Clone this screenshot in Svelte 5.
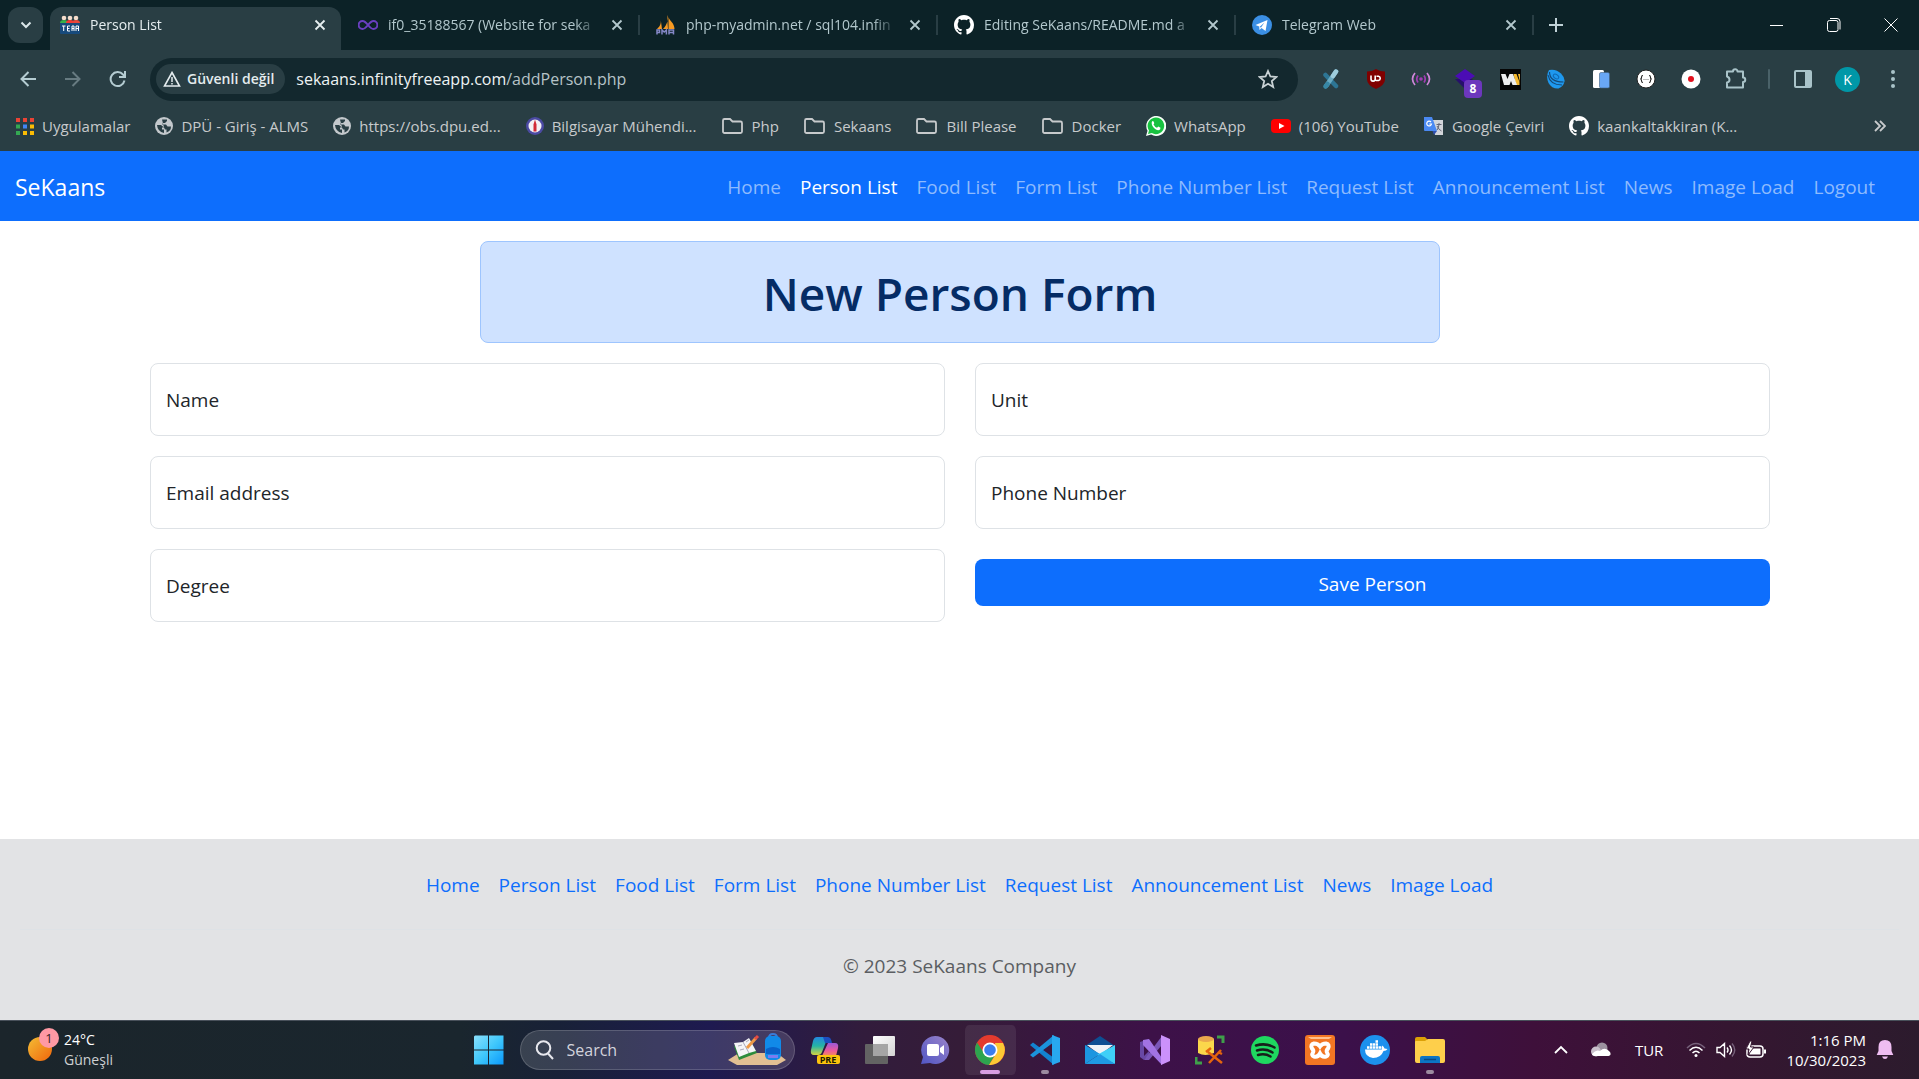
<script>
  const tabs = [
    { icon: 'team', title: 'Person List', active: true },
    { icon: 'infinity', title: 'if0_35188567 (Website for seka' },
    { icon: 'pma', title: 'php-myadmin.net / sql104.infin' },
    { icon: 'github', title: 'Editing SeKaans/README.md a' },
    { icon: 'telegram', title: 'Telegram Web' }
  ];
  const bookmarks = [
    ['apps', 'Uygulamalar'],
    ['globe', 'DPÜ - Giriş - ALMS'],
    ['globe', 'https://obs.dpu.ed...'],
    ['seal', 'Bilgisayar Mühendi...'],
    ['folder', 'Php'],
    ['folder', 'Sekaans'],
    ['folder', 'Bill Please'],
    ['folder', 'Docker'],
    ['whatsapp', 'WhatsApp'],
    ['youtube', '(106) YouTube'],
    ['translate', 'Google Çeviri'],
    ['github', 'kaankaltakkiran (K...']
  ];
  const extensions = ['xtool', 'ublock', 'signal', 'stack', 'wappa', 'shell', 'device', 'json', 'record', 'puzzle'];
  const pages = ['Home', 'Person List', 'Food List', 'Form List', 'Phone Number List', 'Request List', 'Announcement List', 'News', 'Image Load'];
  const apps = ['copilot', 'taskview', 'chat', 'chrome', 'vscode', 'mail', 'vs', 'sqltools', 'spotify', 'xampp', 'docker', 'explorer'];
  const fields = [
    ['name', 'Name', 'text'],
    ['unit', 'Unit', 'text'],
    ['email', 'Email address', 'email'],
    ['phone', 'Phone Number', 'tel'],
    ['degree', 'Degree', 'text']
  ];
</script>

{#snippet icon(name)}
  {#if name === 'team'}
    <svg width="20" height="20" viewBox="0 0 20 20"><circle cx="4" cy="3" r="2.3" fill="#f4dccb"/><circle cx="10" cy="3" r="2.3" fill="#f4dccb"/><circle cx="16" cy="3" r="2.3" fill="#f4dccb"/><path d="M0 8q0-3 4-3t4 3z" fill="#36b04a"/><path d="M12 8q0-3 4-3t4 3z" fill="#e8483a"/><path d="M6 8q0-3 4-3t4 3z" fill="#f03c35"/><rect y="8" width="20" height="11" rx="1" fill="#174a7c"/><path d="M2 11h3.500M3.700 11v5M10 11H7.500v5H10M7.500 13.500H9.500M12 16v-5h2v5M12 13.500h2M16 16v-5h2.500v5M16 13.500h2.500" stroke="#fff" stroke-width="1" fill="none"/></svg>
  {:else if name === 'infinity'}
    <svg width="20" height="20" viewBox="0 0 20 20"><path d="M10 10C8 7.500 6.500 6 4.600 6a4 4 0 0 0 0 8C6.500 14 8 12.500 10 10s3.500-4 5.400-4a4 4 0 0 1 0 8c-1.900 0-3.400-1.500-5.400-4z" fill="none" stroke="#6a3fc0" stroke-width="2"/></svg>
  {:else if name === 'pma'}
    <svg width="20" height="20" viewBox="0 0 20 20"><path d="M4.500 3C5.500 8 4.500 11 1 14h5zM11 0c2 4 0 10-4 14h5zM12.500 2c1 4 6 6 6 12h-6z" fill="#f79a22"/><path d="M1 19.500v-4.500h2.500v2.500H1M6 19.500v-4.500l2.200 2 2.200-2v4.500M13 19.500v-4.500h4.500v4.500M13 17.500h4" stroke="#8588c7" stroke-width="1.500" fill="none"/></svg>
  {:else if name === 'github'}
    <svg width="20" height="20" viewBox="0 0 16 16"><path fill="#fff" d="M8 0C3.580 0 0 3.580 0 8c0 3.540 2.290 6.530 5.470 7.590.4.070.55-.17.55-.38 0-.19-.01-.82-.01-1.490-2.010.37-2.530-.49-2.690-.94-.09-.23-.48-.94-.82-1.130-.28-.15-.68-.52-.01-.53.63-.01 1.080.58 1.230.82.72 1.210 1.870.87 2.330.66.07-.52.28-.87.51-1.070-1.780-.2-3.640-.89-3.640-3.950 0-.87.31-1.590.82-2.150-.08-.2-.36-1.020.08-2.120 0 0 .67-.21 2.200.82.64-.18 1.320-.27 2-.27s1.360.09 2 .27c1.530-1.040 2.200-.82 2.200-.82.44 1.100.16 1.920.08 2.120.51.56.82 1.270.82 2.150 0 3.070-1.870 3.750-3.650 3.950.29.25.54.73.54 1.480 0 1.070-.01 1.930-.01 2.200 0 .21.15.46.55.38A8.010 8.010 0 0 0 16 8c0-4.420-3.580-8-8-8z"/></svg>
  {:else if name === 'telegram'}
    <svg width="20" height="20" viewBox="0 0 20 20"><circle cx="10" cy="10" r="10" fill="#3b8fe4"/><path d="M3.500 10l12-5-2 11-4-3-2 2-.3-3.500z" fill="#fff"/><path d="M7.500 12l5-4.500-3.500 5z" fill="#3b8fe4"/></svg>
  {:else if name === 'apps'}
    <svg width="18" height="20" viewBox="0 0 18 20"><path d="M0 2h4v4H0zM7 2h4v4H7zM14 2h4v4h-4z" fill="#ea4335"/><path d="M0 8.500h4v4H0z" fill="#34a853"/><path d="M7 8.500h4v4H7z" fill="#4285f4"/><path d="M14 8.500h4v4h-4zM7 15h4v4H7zM14 15h4v4h-4z" fill="#fbbc04"/><path d="M0 15h4v4H0z" fill="#34a853"/></svg>
  {:else if name === 'globe'}
    <svg width="18" height="18" viewBox="0 0 18 18"><circle cx="9" cy="9" r="9" fill="#c3c8cc"/><path d="M2 8l4 0 3 2.500H7v2h2V16Q2.500 14.500 2 8M7 2.500h5v1.500L10 6H8L7 7.500h4l1.500 2H16Q16 14 11.500 15.500l0-3h-1.500l-1-2" fill="#293e44"/></svg>
  {:else if name === 'seal'}
    <svg width="18" height="20" viewBox="0 0 18 20"><circle cx="9" cy="10" r="9" fill="#4b4aa3"/><circle cx="9" cy="10" r="6.500" fill="#f3f0f5"/><path d="M9 3.500l1.500 5v7h-3v-7z" fill="#d22a39"/></svg>
  {:else if name === 'folder'}
    <svg width="22" height="18" viewBox="0 0 22 18"><path d="M1 3.500A1.500 1.500 0 0 1 2.500 2H8l2.500 2.500h8A1.500 1.500 0 0 1 20 6v8.500a1.500 1.500 0 0 1-1.500 1.500h-16A1.500 1.500 0 0 1 1 14.500z" fill="none" stroke="#c7cacc" stroke-width="1.800"/></svg>
  {:else if name === 'whatsapp'}
    <svg width="20" height="20" viewBox="0 0 20 20"><path d="M0 20l1.500-5.200A10 10 0 1 1 5.200 18.600z" fill="#f6fff8"/><path d="M2 18l1-3.500a8.300 8.300 0 1 1 2.800 2.600z" fill="#17c240"/><path d="M6 5.500q1-1 1.700.2l.6 1.600-.8 1.200q1.300 2.500 3.500 3.300l1.300-1.300 2.200 1.200q.2 2-2 2.600C8.500 14 4.500 9 6 5.500z" fill="#fff"/></svg>
  {:else if name === 'youtube'}
    <svg width="20" height="14" viewBox="0 0 20 14"><rect width="20" height="14" rx="4" fill="#f00"/><path d="M8 4l5.500 3L8 10z" fill="#fff"/></svg>
  {:else if name === 'translate'}
    <svg width="20" height="20" viewBox="0 0 20 20"><path d="M8 4h11v15H11z" fill="#d2d5da"/><path d="M0 1h8l5 14H1q-1 0-1-1z" fill="#4a89f3"/><path d="M8.500 15h4.500l-3 4z" fill="#2f50ae"/><path d="M7 6a2.400 2.400 0 1 0 .5 2H5.300" fill="none" stroke="#fff" stroke-width="1.200"/><path d="M12.500 8.500h5M15 7v1.500q-.5 4-2 5.500M13 10q2 4 4.500 5" stroke="#667" fill="none"/></svg>
  {:else if name === 'xtool'}
    <svg width="18" height="20" viewBox="0 0 18 20" stroke-width="4.500" stroke-linecap="round"><path d="M3.500 6L14 17" stroke="#2d7594"/><path d="M14 2.500L4.500 16.500" stroke="#6aaac2"/><path d="M14 2.500L11 7" stroke="#9fcddc"/><path d="M5.500 15l-2 2.500" stroke="#3787a5"/></svg>
  {:else if name === 'ublock'}
    <svg width="20" height="20" viewBox="0 0 20 20"><path d="M10 0q4 2.500 9 2.500v8Q19 16 10 20 1 16 1 10.500v-8Q6 2.500 10 0z" fill="#800000"/><path d="M5 6.500v3.500a2 2 0 0 0 4.200 0V6.500M9.200 12V6.500M10.500 7.200h2a2.200 2.200 0 0 1 0 4.300h-2.500" fill="none" stroke="#fff" stroke-width="1.600"/></svg>
  {:else if name === 'signal'}
    <svg width="20" height="20" viewBox="0 0 20 20" fill="none" stroke-width="1.700"><circle cx="10" cy="10" r="1.800" fill="#a23cb4"/><path d="M7 6.500q-2.500 3.500 0 7M13 6.500q2.500 3.500 0 7" stroke="#a23cb4"/><path d="M4 4q-5 6 0 12M16 4q5 6 0 12" stroke="#cf87da"/></svg>
  {:else if name === 'stack'}
    <svg width="24" height="20" viewBox="0 0 24 20"><path d="M1 10l9 9 9-9z" fill="#27106b"/><path d="M11 0l10 7-10 7L1 7z" fill="#4b0cb5"/></svg>
    <span class="badge">8</span>
  {:else if name === 'wappa'}
    <svg width="21" height="21" viewBox="0 0 21 21"><rect width="21" height="21" fill="#050505"/><path d="M13.500 5h3l3 8v3h-3.500zM18 5h2v8z" fill="#f5b92e"/><path d="M1 5h4.500l2 5 2-5H13l4 11h-4.500l-1.500-4-1.500 4H4z" fill="#eee"/></svg>
  {:else if name === 'shell'}
    <svg width="20" height="20" viewBox="0 0 20 20"><path d="M3 1q7-1.500 12 3.500 4 4 3.500 8-1 5-6 7Q6 20 2.500 14-.5 7 3 1z" fill="#1e98ee"/><path d="M3.500 3q0 10 14 10M2 6q2 10 14 10" stroke="#154a78" stroke-width="1.200" fill="none"/><ellipse cx="10" cy="7.500" rx="3" ry="2" fill="none" stroke="#0d68b5" transform="rotate(35 10 7.500)"/></svg>
  {:else if name === 'device'}
    <svg width="18" height="20" viewBox="0 0 18 20"><rect x="1" y="1" width="11" height="18" rx="1.500" fill="#fff"/><rect x="7.500" y="3.500" width="10" height="15.500" rx="1.500" fill="#69a7f5" stroke="#3f5f80" stroke-width=".6"/></svg>
  {:else if name === 'json'}
    <svg width="20" height="20" viewBox="0 0 20 20"><circle cx="10" cy="10" r="9" fill="#fff" stroke="#222"/><path d="M7 6.500q-1.500 0-1.500 1.800t-1.200 1.700q1.200 0 1.200 1.700t1.500 1.800M13 6.500q1.500 0 1.500 1.800t1.200 1.700q-1.200 0-1.200 1.700t-1.500 1.800" fill="none" stroke="#222" stroke-width="1.100"/><path d="M7.500 10.500h5" stroke="#777" stroke-dasharray="1 1"/></svg>
  {:else if name === 'record'}
    <svg width="20" height="20" viewBox="0 0 20 20"><circle cx="10" cy="10" r="9.500" fill="#fff"/><circle cx="10" cy="10" r="3" fill="#e3101d"/></svg>
  {:else if name === 'puzzle'}
    <svg width="22" height="22" viewBox="0 0 22 22"><path d="M2 3.500h6a2 2 0 0 1 4.500 0H18v6a2 2 0 0 1 0 4.500v5.500H2v-5q2.500-.5 2.500-2.800T2 8.500z" fill="none" stroke="#a9c3c9" stroke-width="2" stroke-linejoin="round"/></svg>
  {:else if name === 'close'}
    <svg width="12" height="12" viewBox="0 0 12 12"><path d="M1.500 1.500l9 9M10.500 1.500l-9 9" stroke="currentColor" stroke-width="1.800"/></svg>
  {:else if name === 'copilot'}
    <svg width="30" height="32" viewBox="0 0 30 32">
      <defs><linearGradient id="cpa" x1="0" y1="0" x2="0" y2="1"><stop stop-color="#2388df"/><stop offset=".5" stop-color="#25b3a5"/><stop offset="1" stop-color="#d6d641"/></linearGradient><linearGradient id="cpb" x1="0" y1="0" x2="0" y2="1"><stop stop-color="#9a58d8"/><stop offset=".6" stop-color="#ee5a99"/><stop offset="1" stop-color="#f18c58"/></linearGradient></defs>
      <path d="M7 3h11l-6 15q-1 3-4 3H4q-4 0-3-5l2-9q1-4 4-4z" fill="url(#cpa)"/><path d="M13 3h5q3 0 4 6h-7z" fill="#1c4fc0"/><path d="M18 9h7q4 0 3 5l-2 8H12z" fill="url(#cpb)"/><rect x="7" y="21" width="23" height="9" rx="2" fill="#fdc40c"/><text x="18" y="29" class="pre">PRE</text></svg>
  {:else if name === 'taskview'}
    <svg width="30" height="30" viewBox="0 0 30 30"><defs><linearGradient id="tv" x1="0" y1="0" x2="1" y2="1"><stop stop-color="#fff"/><stop offset="1" stop-color="#d3d3d3"/></linearGradient></defs><rect y="9" width="23" height="20" rx="1" fill="#636363"/><rect x="8" y="1" width="22" height="20" rx="1" fill="url(#tv)"/><path d="M8 9h15v12H8z" fill="#a5a5a5"/></svg>
  {:else if name === 'chat'}
    <svg width="30" height="30" viewBox="0 0 30 30"><defs><linearGradient id="ch" x1="1" y1="0" x2="0" y2="1"><stop stop-color="#9a83c9"/><stop offset="1" stop-color="#5156c5"/></linearGradient></defs><path d="M15 1a14 14 0 1 1-5 27l-9 1 2-7A14 14 0 0 1 15 1z" fill="url(#ch)"/><rect x="7" y="9" width="12" height="12" rx="2" fill="#fff"/><path d="M20 13l4-3v10l-4-3z" fill="#fff"/></svg>
  {:else if name === 'chrome'}
    <svg width="30" height="30" viewBox="0 0 30 30"><circle cx="15" cy="15" r="15" fill="#e33b2e"/><path d="M2 7.500A15 15 0 0 0 14 30l7-12-6 4-6-4z" fill="#2da44f"/><path d="M28 8a15 15 0 0 1-14 22l7.500-12L20 8z" fill="#fcc934"/><path d="M3 6.500l6 11L15 8h13A15 15 0 0 0 3 6.500z" fill="#e33b2e"/><circle cx="15" cy="15" r="7.500" fill="#fff"/><circle cx="15" cy="15" r="5.800" fill="#3b7ded"/></svg>
  {:else if name === 'vscode'}
    <svg width="30" height="30" viewBox="0 0 30 30"><path d="M0 10l3-2.500L24 23v7z" fill="#1383cf"/><path d="M0 20l3 2.500L24 7V0z" fill="#1b93dc"/><path d="M22 0l8 3v24l-8 3z" fill="#28a8ef"/></svg>
  {:else if name === 'mail'}
    <svg width="30" height="30" viewBox="0 0 30 30"><path d="M0 11L15 1l15 10z" fill="#0d4f93"/><path d="M2 10h26L15 20z" fill="#eef3f7"/><path d="M0 10l15 9-15 10z" fill="#1c96e0"/><path d="M30 10L12 20l18 9z" fill="#3fd0f7"/><path d="M0 29l15-10 15 10z" fill="#1f9ae3"/></svg>
  {:else if name === 'vs'}
    <svg width="30" height="30" viewBox="0 0 30 30"><path d="M0 7l3-1 6 5v9l-5 5-4-3z" fill="#6848a5"/><path d="M4 10l6 5-6 6z" fill="#3b1148"/><path d="M4 25L22 1v9L9 25z" fill="#7a56b8"/><path d="M3 5l6-1 13 19v7L3 10z" fill="#a273e4"/><path d="M21 0l9 4v22l-9 4z" fill="#cb91fb"/></svg>
  {:else if name === 'sqltools'}
    <svg width="30" height="30" viewBox="0 0 30 30"><path d="M3 4v14q7 4 16 0V4z" fill="#fbd74b"/><ellipse cx="11" cy="4" rx="8" ry="3" fill="#eaa84d"/><path d="M22 2h6v6M1 22v6h6" fill="none" stroke="#3f9f4a" stroke-width="3"/><path d="M13 17l14 11M26 15l-12 13M11 17l5-4M23 17l4 2" stroke="#e4650d" stroke-width="2.500"/></svg>
  {:else if name === 'spotify'}
    <svg width="28" height="28" viewBox="0 0 28 28"><circle cx="14" cy="14" r="14" fill="#1fd760"/><path d="M5 9.500q10-3 18.500 2M6 14.500q8.500-2.500 15.500 2M7 19q7-2 12.500 1.500" fill="none" stroke="#171f1a" stroke-width="2.500" stroke-linecap="round"/></svg>
  {:else if name === 'xampp'}
    <svg width="30" height="30" viewBox="0 0 30 30"><rect width="30" height="30" rx="3" fill="#f27623"/><path d="M3 2h24l-3 2H6z" fill="#ffc18e"/><path d="M9 8.500q4 0 6 3 2-3 6-3 4 1 2 5-2 2-1 4 2 3-1 4-4 1-6-3-2 4-6 3-3-1-1-4 1-2-1-4-2-4 2-5z" fill="none" stroke="#fff" stroke-width="4"/></svg>
  {:else if name === 'docker'}
    <svg width="30" height="30" viewBox="0 0 30 30"><circle cx="15" cy="15" r="15" fill="#1c90ed"/><path d="M5 14.500h17q-1-2 0-4 2 1 2.500 3l3 .5q-1 2-4 2Q21 23 13 23 5 22 5 14.500z" fill="#fff"/><path d="M7 12.500h14M10 9.500h8M15.500 6.500h2.500" stroke="#fff" stroke-width="2.500" stroke-dasharray="2.500 .5"/></svg>
  {:else if name === 'explorer'}
    <svg width="30" height="30" viewBox="0 0 30 30"><path d="M0 4q0-2 2-2h8l3 3v5H0z" fill="#dca006"/><path d="M0 7q0-1 1-1h9l3-2h15q2 0 2 2v20q0 2-2 2H2q-2 0-2-2z" fill="#fecf4b"/><path d="M5 28v-5q0-2 2-2h16q2 0 2 2v5z" fill="#0c75c4"/><path d="M9 24.500h12" stroke="#064a86" stroke-width="1.500"/></svg>
  {/if}
{/snippet}

<div class="screen">
  <header class="browser">
    <div class="tabstrip">
      <button class="tabsearch" aria-label="Search tabs"><svg width="12" height="8" viewBox="0 0 12 8"><path d="M1.500 1.500L6 6l4.500-4.500" fill="none" stroke="#dbe7ea" stroke-width="2"/></svg></button>
      {#each tabs as tab}
        <div class="tab" class:active={tab.active}>
          <button class="tabname">{@render icon(tab.icon)}<span>{tab.title}</span></button>
          <button class="x" aria-label="Close tab">{@render icon('close')}</button>
        </div>
      {/each}
      <button class="newtab" aria-label="New tab"><svg width="14" height="14" viewBox="0 0 14 14"><path d="M7 0v14M0 7h14" stroke="#c0d2d7" stroke-width="2"/></svg></button>
      <div class="window">
        <button aria-label="Minimize"><svg width="14" height="14" viewBox="0 0 14 14"><path d="M0 7.500h13" stroke="#fff"/></svg></button>
        <button aria-label="Restore"><svg width="14" height="14" viewBox="0 0 14 14" fill="none" stroke="#fff"><rect x="0.500" y="2.500" width="10.500" height="11" rx="2"/><path d="M3 .5h7q3 0 3 3v8"/></svg></button>
        <button aria-label="Close"><svg width="14" height="14" viewBox="0 0 14 14"><path d="M.5.500l13 13M13.500.500l-13 13" stroke="#fff"/></svg></button>
      </div>
    </div>

    <div class="toolbar">
      <button class="tool" aria-label="Back"><svg width="16" height="16" viewBox="0 0 16 16" fill="none" stroke="#b4ccd2" stroke-width="2"><path d="M16 8H2M8.500 1L1.500 8l7 7"/></svg></button>
      <button class="tool" aria-label="Forward"><svg width="16" height="16" viewBox="0 0 16 16" fill="none" stroke="#677b81" stroke-width="2"><path d="M0 8h14M7.500 1l7 7-7 7"/></svg></button>
      <button class="tool" aria-label="Reload"><svg width="18" height="18" viewBox="0 0 18 18" fill="none" stroke="#b4ccd2" stroke-width="2"><path d="M15.500 10.500A7 7 0 1 1 14 4.500l2 2M16 1v6h-6"/></svg></button>
      <div class="omnibox">
        <button class="secure"><svg width="18" height="16" viewBox="0 0 18 16"><path d="M9 1.500L16.500 15h-15z" fill="none" stroke="#e4ecee" stroke-width="1.600"/><path d="M9 6v5M9 12v1.500" stroke="#e4ecee" stroke-width="1.500"/></svg>Güvenli değil</button>
        <div class="url">sekaans.infinityfreeapp.com<span>/addPerson.php</span></div>
        <button class="star" aria-label="Bookmark"><svg width="20" height="20" viewBox="0 0 20 20"><path d="M10 2l2.400 5.500 6 .5-4.600 4 1.400 6-5.200-3.200L4.800 18l1.400-6L1.600 8l6-.5z" fill="none" stroke="#c9d2d5" stroke-width="1.800"/></svg></button>
      </div>
      {#each extensions as name}
        <button class="tool" aria-label={name}>{@render icon(name)}</button>
      {/each}
      <span class="divider"></span>
      <button class="tool" aria-label="Side panel"><svg width="18" height="18" viewBox="0 0 18 18"><rect x="1" y="1" width="16" height="16" rx="1" fill="none" stroke="#a9c3c9" stroke-width="2"/><path d="M11 1h6v16h-6z" fill="#a9c3c9"/></svg></button>
      <button class="tool" aria-label="Profile"><span class="avatar">K</span></button>
      <button class="tool" aria-label="Menu"><svg width="4" height="18" viewBox="0 0 4 18" fill="#a9c3c9"><circle cx="2" cy="2" r="2"/><circle cx="2" cy="9" r="2"/><circle cx="2" cy="16" r="2"/></svg></button>
    </div>

    <nav class="bookmarks">
      {#each bookmarks as [name, label]}
        <a href="#{label}">{@render icon(name)}{label}</a>
      {/each}
      <button aria-label="More bookmarks"><svg width="12" height="12" viewBox="0 0 12 12" fill="none" stroke="#c7cacc" stroke-width="1.800"><path d="M1 1l5 5-5 5M6 1l5 5-5 5"/></svg></button>
    </nav>
  </header>

  <nav class="navbar">
    <a class="brand" href="#home">SeKaans</a>
    <div class="links">
      {#each [...pages, 'Logout'] as page}
        <a href="#{page}" class:current={page === 'Person List'}>{page}</a>
      {/each}
    </div>
  </nav>

  <main>
    <div class="alert"><h1>New Person Form</h1></div>
    <form>
      {#each fields as [id, label, type]}
        <div class="field">
          <input {id} {type} />
          <label for={id}>{label}</label>
        </div>
      {/each}
      <button type="button" class="save">Save Person</button>
    </form>
  </main>

  <footer>
    <div class="footlinks">
      {#each pages as page}
        <a href="#{page}">{page}</a>
      {/each}
    </div>
    <p>© 2023 SeKaans Company</p>
  </footer>

  <div class="taskbar">
    <button class="weather">
      <svg width="34" height="44" viewBox="0 0 34 44"><defs><linearGradient id="sun" x1="0" y1="0" x2="1" y2="1"><stop stop-color="#f3bd35"/><stop offset="1" stop-color="#f0650c"/></linearGradient></defs><circle cx="13" cy="21" r="12" fill="url(#sun)"/><circle cx="22" cy="10" r="10" fill="#ff99a4"/><text x="22" y="15" class="count">1</text></svg>
      <span class="temp">24°C<small>Güneşli</small></span>
    </button>
    <div class="center">
      <button class="app" aria-label="Start"><svg width="30" height="30" viewBox="0 0 30 30"><defs><linearGradient id="win" x1="0" y1="0" x2="1" y2="1"><stop stop-color="#8be0fc"/><stop offset=".5" stop-color="#40c8fb"/><stop offset="1" stop-color="#0a98fb"/></linearGradient></defs><path d="M1 .5h13v14H0V1.500zM15 .5h14.500v14H15zM0 15.500h14v14H0zM15 15.500h14.500v14H15z" fill="url(#win)"/></svg></button>
      <label class="search">
        <svg width="20" height="20" viewBox="0 0 20 20" fill="none" stroke="#e8e8ee" stroke-width="2"><circle cx="8.500" cy="8" r="6.800"/><path d="M13 13.500l5 5.500"/></svg>
        <input type="text" placeholder="Search" aria-label="Search" />
        <svg width="58" height="34" viewBox="0 0 58 34"><path d="M0 27l11-7h38l9 7-9 5H9z" fill="#e2bf93"/><path d="M6 13l16-6 7 13-18 7z" fill="#2c8c3c"/><path d="M6 10l9-1 6-4 7 13-7 2-10 4z" fill="#f5f5f7"/><path d="M15 9l6 11M10 13l4-1M12 17l4-1M18 9l3-2" stroke="#a9a9ba"/><path d="M19 15l9-10" stroke="#ee9a46" stroke-width="3"/><path d="M27 6l3-3" stroke="#e54c43" stroke-width="3"/><path d="M41 5q0-4 4-4t4 4" fill="none" stroke="#3a7bd8" stroke-width="2"/><rect x="37" y="3" width="16" height="24" rx="5" fill="#118ae8"/><path d="M38 16q7-4 14 0v5H38z" fill="#0861c9"/><path d="M40 22h10v3H40z" fill="#7a7cf0"/></svg>
      </label>
      {#each apps as name}
        <button class="app" class:focused={name === 'chrome'} class:running={name === 'vscode' || name === 'explorer'} aria-label={name}>{@render icon(name)}</button>
      {/each}
    </div>
    <div class="tray">
      <svg width="14" height="10" viewBox="0 0 14 10"><path d="M1 8l6-6 6 6" fill="none" stroke="#fff" stroke-width="1.800"/></svg>
      <svg class="cloud" width="20" height="16" viewBox="0 0 20 16"><circle cx="11" cy="6" r="5.500" fill="#9c929f"/><circle cx="5" cy="9.500" r="5" fill="#c9c0cb"/><path d="M1 12q4-5 8-3 5-5 10 1 2 4-3 4H5q-4 0-4-2z" fill="#fff"/></svg>
      <span class="lang">TUR</span>
      <div class="status">
        <svg width="20" height="16" viewBox="0 0 20 16" fill="none" stroke="#fff" stroke-width="1.500"><path d="M1 6q9-9 18 0" stroke="#76617a"/><path d="M3.500 8.500q6.500-6.500 13 0M6.500 11q3.500-3.500 7 0"/><circle cx="10" cy="13.500" r="1.500" fill="#fff" stroke="none"/></svg>
        <svg width="20" height="16" viewBox="0 0 20 16" fill="none" stroke="#fff" stroke-width="1.400"><path d="M1 5.500h3L8.500 1.500v13L4 10.500H1zM11 5.500q2 2.500 0 5M13.500 3.500q4 4.500 0 9"/><path d="M16 1.500q5.500 6.500 0 13" stroke="#76617a"/></svg>
        <svg width="20" height="18" viewBox="0 0 20 18"><rect x="1" y="5" width="16" height="11" rx="3" fill="none" stroke="#fff" stroke-width="1.500"/><rect x="3.500" y="7.500" width="11" height="6" fill="#fff"/><path d="M18 8.500h2v4h-2z" fill="#fff"/><path d="M4 0L0 8h3l-1 6 6-8H4.500L6 0z" fill="#fff" stroke="#35162f"/></svg>
      </div>
      <time>1:16 PM<br />10/30/2023</time>
      <svg width="18" height="20" viewBox="0 0 18 20" fill="#efbdf2"><path d="M9 0q6.500 0 6.500 7v4l1.800 4H.7l1.800-4V7Q2.500 0 9 0zM6 16.500h6q-1 2.500-3 2.500t-3-2.500z"/></svg>
    </div>
  </div>
</div>

<style>
  :global(body) { margin: 0; }
  .screen { min-height: 100vh; display: flex; flex-direction: column; font-family: "Open Sans", "Noto Sans", sans-serif; background: #fff; color: #212529; overflow-x: hidden; }
  .screen * { box-sizing: border-box; }
  button { font: inherit; color: inherit; background: none; border: 0; padding: 0; display: flex; align-items: center; justify-content: center; flex: none; }
  a { text-decoration: none; color: inherit; white-space: nowrap; }
  svg { flex: none; display: block; }

  .browser { background: #293e44; font-size: 14px; line-height: 20px; }
  .tabstrip { display: flex; height: 50px; background: #0c2227; padding: 7px 0 0 8px; }
  .tabsearch { width: 35px; height: 36px; border-radius: 12px; background: #293e44; margin-right: 7px; }
  .tab { flex: 0 1 298px; min-width: 0; display: flex; align-items: center; height: 36px; padding: 0 17px 0 16px; color: #b3c8cd; position: relative; }
  .tab:not(.active)::after { content: ""; width: 2px; height: 20px; background: #293e44; position: absolute; right: 0; top: 8px; }
  .tab.active { flex-basis: 291px; margin-right: 1px; height: 43px; padding: 0 15px 7px 10px; background: #293e44; border-radius: 12px 12px 0 0; color: #e6eef0; }
  .tabname { flex: 1; min-width: 0; justify-content: flex-start; gap: 10px; }
  .tabname span { flex: 1; min-width: 0; text-align: left; white-space: nowrap; overflow: hidden; mask-image: linear-gradient(to right, #000 calc(100% - 24px), transparent); }
  .x { margin-left: 12px; }
  .newtab { width: 40px; height: 36px; margin-left: 2px; }
  .window { display: flex; margin-left: auto; height: 36px; }
  .window button { width: 57px; }

  .toolbar { display: flex; align-items: center; height: 58px; padding: 0 4px 0 5px; }
  .tool { width: 45px; height: 40px; position: relative; }
  .omnibox { flex: 1; min-width: 0; height: 43px; margin: 0 10px; padding: 0 20px 0 6px; border-radius: 22px; background: #13282e; display: flex; align-items: center; }
  .secure { height: 30px; padding: 0 11px 0 7px; gap: 6px; border-radius: 15px; background: #293e44; color: #e4ecee; font-weight: 600; white-space: nowrap; }
  .url { flex: 1; min-width: 0; margin-left: 11px; font-size: 16px; line-height: 24px; color: #eef3f4; white-space: nowrap; overflow: hidden; }
  .url span { color: #b6c3c7; }
  .badge { position: absolute; right: 6px; bottom: 1px; width: 18px; height: 18px; border-radius: 4px; background: #6c37bd; color: #fff; font-size: 12px; line-height: 18px; font-weight: 700; text-align: center; }
  .divider { width: 2px; height: 20px; margin: 0 10px; background: #4a6269; border-radius: 1px; }
  .avatar { width: 25px; height: 25px; border-radius: 50%; background: #0097a7; color: #fff; font-size: 14px; line-height: 25px; }
  .bookmarks { display: flex; align-items: center; gap: 25px; height: 43px; padding: 0 33px 7px 16px; color: #c7cacc; font-size: 15px; }
  .bookmarks a { display: flex; align-items: center; gap: 8px; }
  .bookmarks button { margin-left: auto; }

  .navbar { display: flex; align-items: center; justify-content: space-between; min-height: 70px; padding: 2px 44px 0 15px; background: #0d6efd; color: #fff; }
  .brand { font-size: 23px; line-height: 36px; }
  .links, .footlinks { display: flex; gap: 19px; font-size: 19px; line-height: 30px; }
  .links a { color: #8ebbfe; }
  .links .current { color: #fff; }

  main { flex: 1; padding: 20px 149px 20px 150px; }
  .alert { width: 60%; min-width: 600px; max-width: 960px; margin: 0 auto 20px; padding: 21px 20px 19px; border: 1px solid #9ec5fe; border-radius: 8px; background: #cfe2ff; color: #052c65; text-align: center; }
  h1 { margin: 0; font-size: 46px; line-height: 60px; font-weight: 600; }
  form { display: grid; grid-template-columns: 1fr 1fr; gap: 20px 30px; align-items: center; }
  .field { display: grid; font-size: 19px; line-height: 30px; }
  .field input, .field label { grid-area: 1 / 1; }
  .field input { width: 100%; height: 73px; padding: 20px 15px; border: 1px solid #dee2e6; border-radius: 8px; background: #fff; font: inherit; outline: 0; }
  .field label { align-self: center; justify-self: start; margin-left: 16px; }
  .save { height: 47px; border-radius: 8px; background: #0d6efd; color: #fff; font-size: 19px; padding-top: 2px; margin-bottom: 6px; }

  footer { background: #e2e3e5; padding: 31px 20px 39px; font-size: 19px; line-height: 30px; text-align: center; }
  .footlinks { justify-content: center; padding-bottom: 29px; border-bottom: 1px solid #dee2e6; color: #0d6efd; }
  footer p { margin: 21px 0 0; color: #5b5e62; }

  .taskbar { display: grid; grid-template-columns: 1fr auto 1fr; align-items: center; height: 59px; border-top: 1px solid #48505a; color: #fff; font-size: 14px; line-height: 20px;
    background: linear-gradient(to right, #1b252b 0%, #1a262e 24%, #182137 29%, #1e1a50 37%, #321c3c 45%, #351c38 50%, #3d1148 60%, #3b104a 70%, #3e103a 80%, #351631 90%, #2c1b2d 100%); }
  .weather { justify-self: start; gap: 3px; margin-left: 27px; text-align: left; }
  .temp, .temp small { display: block; font-size: 14px; }
  .temp small { color: #cdd0d2; }
  .count { font-size: 13px; text-anchor: middle; fill: #3a2428; }
  .center { display: flex; align-items: center; }
  .app { width: 55px; height: 50px; position: relative; }
  .app.focused { background: #ffffff14; border-radius: 6px; background-clip: content-box; padding: 0 2px; }
  .app.focused::after, .app.running::after { content: ""; position: absolute; bottom: 1px; width: 8px; height: 4px; border-radius: 2px; background: #9c8ba0; }
  .app.focused::after { width: 20px; background: #d89ee2; }
  .pre { font-size: 9px; font-weight: 700; text-anchor: middle; fill: #201a00; }
  .search { display: flex; align-items: center; width: 275px; height: 40px; margin: 0 3px; padding: 0 8px 0 14px; border: 1px solid #ffffff2b; border-radius: 20px; background: #ffffff24; }
  .search input { flex: 1; min-width: 0; margin-left: 12px; border: 0; padding: 0; background: none; outline: 0; font: inherit; font-size: 16px; color: #fff; }
  .search input::placeholder { color: #d3d3dc; opacity: 1; }
  .tray { justify-self: end; display: flex; align-items: center; margin-right: 25px; font-size: 15px; }
  .cloud { margin-left: 23px; }
  .lang { margin-left: 24px; }
  .status { display: flex; align-items: center; gap: 10px; margin: 0 20px 0 23px; }
  time { text-align: right; margin-right: 10px; }
</style>
